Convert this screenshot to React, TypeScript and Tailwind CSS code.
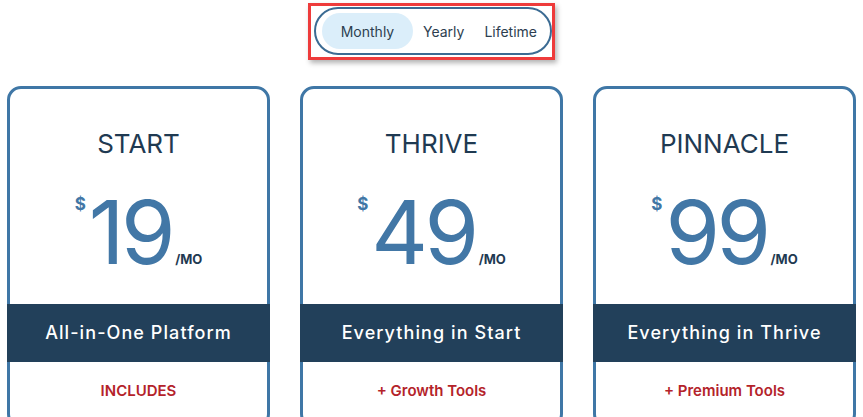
import React, { useState } from 'react';

const PLANS = [
  { name: 'START', price: '19', band: 'All-in-One Platform', extra: 'INCLUDES' },
  { name: 'THRIVE', price: '49', band: 'Everything in Start', extra: '+ Growth Tools' },
  { name: 'PINNACLE', price: '99', band: 'Everything in Thrive', extra: '+ Premium Tools' },
];

const PERIODS = ['Monthly', 'Yearly', 'Lifetime'];

const BillingToggle: React.FC = () => {
  const [period, setPeriod] = useState('Monthly');

  return (
    <div className="flex justify-center pt-[3px]">
      <div className="border-[3px] border-[#ee3b3b] shadow-[2px_3px_5px_rgba(0,0,0,0.3)] pl-[3px] pt-px pb-[2px]">
        <div className="flex items-center rounded-full border-2 border-[#3b6b93] p-1 pl-[6px] pr-[3px]">
          {PERIODS.map((p) => (
            <button
              key={p}
              onClick={() => setPeriod(p)}
              className={
                p === period
                  ? 'h-9 w-[91px] pt-0.5 rounded-full bg-[#dbeefa] text-sm text-[#2d3e50]'
                  : 'h-9 px-[10px] pt-0.5 rounded-full text-sm text-[#2d3e50]'
              }
            >
              {p}
            </button>
          ))}
        </div>
      </div>
    </div>
  );
};

const PlanCard: React.FC<{ plan: (typeof PLANS)[number] }> = ({ plan }) => (
  <div className="rounded-[14px] border-[3px] border-[#3f77a6] pt-[39px] pb-6 bg-white">
    <h2 className="text-center text-[26px] leading-[32px] text-[#1f3a52]">{plan.name}</h2>
    <div className="mt-[28px] flex justify-center items-baseline text-[#4277a6]">
      <span className="self-start mt-[8px] mr-[3px] text-[17px] leading-none font-bold">$</span>
      <span className="text-[88px] leading-none tracking-[-0.04em]">{plan.price}</span>
      <span className="ml-[3px] text-[13px] leading-none font-bold text-[#1f3a52]">/MO</span>
    </div>
    <div className="mt-[28px] -mx-[3px] h-[58px] flex items-center justify-center bg-[#22405a] text-white text-lg font-medium tracking-[0.06em]">
      {plan.band}
    </div>
    <p className="mt-[19px] text-center text-[15px] leading-5 font-semibold text-[#b4232a]">{plan.extra}</p>
  </div>
);

export default function App() {
  return (
    <div className="min-h-screen bg-white font-['Inter','Liberation_Sans',sans-serif]">
      <BillingToggle />
      <div className="mt-[26px] px-[7px] grid grid-cols-3 gap-[30px]">
        {PLANS.map((plan) => (
          <PlanCard key={plan.name} plan={plan} />
        ))}
      </div>
    </div>
  );
}
